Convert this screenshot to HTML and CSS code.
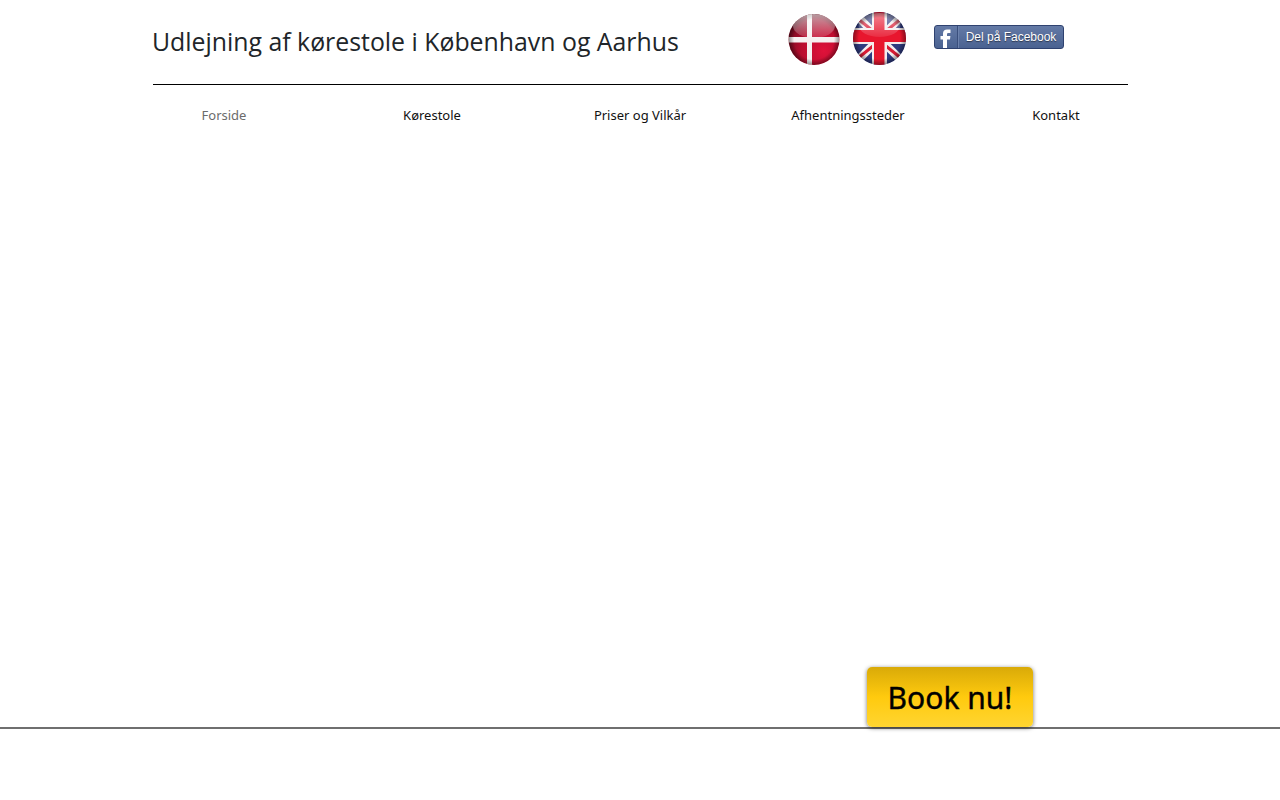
FILE: index.html
```html
<!DOCTYPE html>
<html lang="da">
  <head>
    <meta charset="UTF-8" />
    <meta name="viewport" content="width=device-width, initial-scale=1.0" />
    <title>Udlejning af kørestole</title>
    <link rel="stylesheet" href="styles.css">
  </head>
  <body>
    <header class="header">
      <h1 class="title">Udlejning af kørestole i København og Aarhus</h1>
      <div class="flags">
        <a href="#" class="flag">
          <svg width="54" height="54" viewBox="0 0 54 54">
            <defs>
              <radialGradient id="dk-red" cx="0.68" cy="0.72" r="0.75">
                <stop offset="0" stop-color="#e0123a" />
                <stop offset="0.55" stop-color="#b80d2e" />
                <stop offset="1" stop-color="#6d0a1e" />
              </radialGradient>
              <linearGradient id="gloss" x1="0" y1="0" x2="0" y2="1">
                <stop offset="0" stop-color="#fff" stop-opacity="0.6" />
                <stop offset="1" stop-color="#fff" stop-opacity="0.12" />
              </linearGradient>
              <radialGradient id="rim" cx="0.5" cy="0.5" r="0.5">
                <stop offset="0.78" stop-color="#000" stop-opacity="0" />
                <stop offset="1" stop-color="#000" stop-opacity="0.4" />
              </radialGradient>
              <clipPath id="dk-clip"><circle cx="27" cy="27.5" r="25.5" /></clipPath>
              <clipPath id="uk-clip"><circle cx="26.5" cy="26.5" r="26.5" /></clipPath>
              <filter id="soft" x="-5%" y="-5%" width="110%" height="110%">
                <feGaussianBlur stdDeviation="0.5" />
              </filter>
            </defs>
            <g clip-path="url(#dk-clip)">
              <rect width="54" height="54" fill="url(#dk-red)" />
              <g filter="url(#soft)">
                <rect x="20" width="5" height="54" fill="#f6f0f0" />
                <rect y="25" width="54" height="5.5" fill="#f6f0f0" />
              </g>
              <circle cx="27" cy="27.5" r="25.5" fill="url(#rim)" />
              <ellipse cx="27" cy="14" rx="21" ry="12" fill="url(#gloss)" />
            </g>
          </svg>
        </a>
        <a href="#" class="flag">
          <svg width="54" height="54" viewBox="0 0 54 54">
            <g clip-path="url(#uk-clip)">
              <rect width="54" height="54" fill="#2f3a80" />
              <g filter="url(#soft)">
                <path d="M0 0L53 53M53 0L0 53" stroke="#f3eef0" stroke-width="8" />
                <path d="M4 6L20 19M49 47L33 34M49 6L33 19M4 47L20 34" stroke="#d81c36" stroke-width="3" />
                <rect x="19" width="15" height="54" fill="#f5eced" />
                <rect y="16" width="54" height="16" fill="#f5eced" />
                <rect x="21" width="10.500" height="54" fill="#e8182f" />
                <rect y="18" width="54" height="12" fill="#e8182f" />
              </g>
              <ellipse cx="26.500" cy="13" rx="21" ry="12" fill="url(#gloss)" opacity="0.8" />
              <circle cx="26.500" cy="26.500" r="26.500" fill="url(#rim)" />
            </g>
          </svg>
        </a>
      </div>
      <a href="#" class="fb-share">
        <span class="fb-icon">
          <svg width="22" height="22" viewBox="0 0 22 22">
            <path d="M8 22V13.500H5.500V10H8V7.500C8 4.700 9.700 3.500 12 3.500H15.500V7H13.500C12.500 7 12 7.400 12 8.300V10H15.400L15 13.500H12V22Z" fill="#fff" />
          </svg>
        </span>
        <span class="fb-label">Del på Facebook</span>
      </a>
    </header>

    <nav class="nav">
      <a href="#" class="nav-item active">Forside</a>
      <a href="#" class="nav-item">Kørestole</a>
      <a href="#" class="nav-item">Priser og Vilkår</a>
      <a href="#" class="nav-item">Afhentningssteder</a>
      <a href="#" class="nav-item">Kontakt</a>
    </nav>

    <main class="content">
      <a href="#" class="book-btn">Book nu!</a>
    </main>

    <footer class="footer"></footer>
  </body>
</html>
```

FILE: styles.css
```css
body {
  margin: 0;
  padding: 0;
  background: #fff;
  font-family: "Noto Sans", Arial, sans-serif;
  overflow: hidden;
}
.header {
  box-sizing: border-box;
  width: 975px;
  height: 85px;
  margin-left: 153px;
  display: flex;
  align-items: flex-start;
  border-bottom: 1px solid #000;
}
.title {
  width: 635px;
  margin: 23px 0 0 -1px;
  font-family: "Open Sans", Arial, sans-serif;
  font-size: 24.85px;
  line-height: 36px;
  font-weight: 400;
  color: #212529;
  white-space: nowrap;
}
.flags {
  display: flex;
  gap: 12px;
  margin-top: 12px;
}
.flag {
  display: block;
  height: 54px;
}
.fb-share {
  box-sizing: border-box;
  width: 130px;
  height: 24px;
  margin: 25px 0 0 27px;
  display: flex;
  border: 1px solid #2f4270;
  border-radius: 3px;
  background: linear-gradient(to bottom, #647aa6, #4a6291);
  color: #fff;
  text-decoration: none;
}
.fb-icon {
  width: 23px;
  height: 22px;
  box-sizing: border-box;
  border-right: 1px solid #3a4f7d;
}
.fb-icon svg {
  display: block;
}
.fb-label {
  flex: 1;
  font-family: "Liberation Sans", Arial, sans-serif;
  font-size: 12px;
  line-height: 22px;
  text-align: center;
  text-shadow: 0 1px 1px rgba(0, 0, 0, 0.5);
  white-space: nowrap;
  border-left: 1px solid #6c82ad;
}
.nav {
  width: 1040px;
  margin: 0 auto;
  display: flex;
}
.nav-item {
  width: 208px;
  height: 60px;
  font-size: 13px;
  line-height: 60px;
  text-align: center;
  color: #111;
  text-decoration: none;
}
.nav-item.active {
  color: #6b6b6b;
}
.content {
  height: 582px;
  display: flex;
  justify-content: flex-end;
  align-items: flex-end;
  padding-right: 247px;
}
.book-btn {
  box-sizing: border-box;
  width: 166px;
  height: 60px;
  padding-top: 1px;
  border-radius: 5px;
  background: linear-gradient(to bottom, #d9aa08 0%, #ffca0e 50%, #ffd531 100%);
  box-shadow: 0 1px 4px rgba(0, 0, 0, 0.55);
  font-size: 30px;
  line-height: 59px;
  -webkit-text-stroke: 0.4px #000;
  text-align: center;
  color: #000;
  text-decoration: none;
}
.footer {
  height: 70px;
  border-top: 2px solid #6f6f6f;
}
```
